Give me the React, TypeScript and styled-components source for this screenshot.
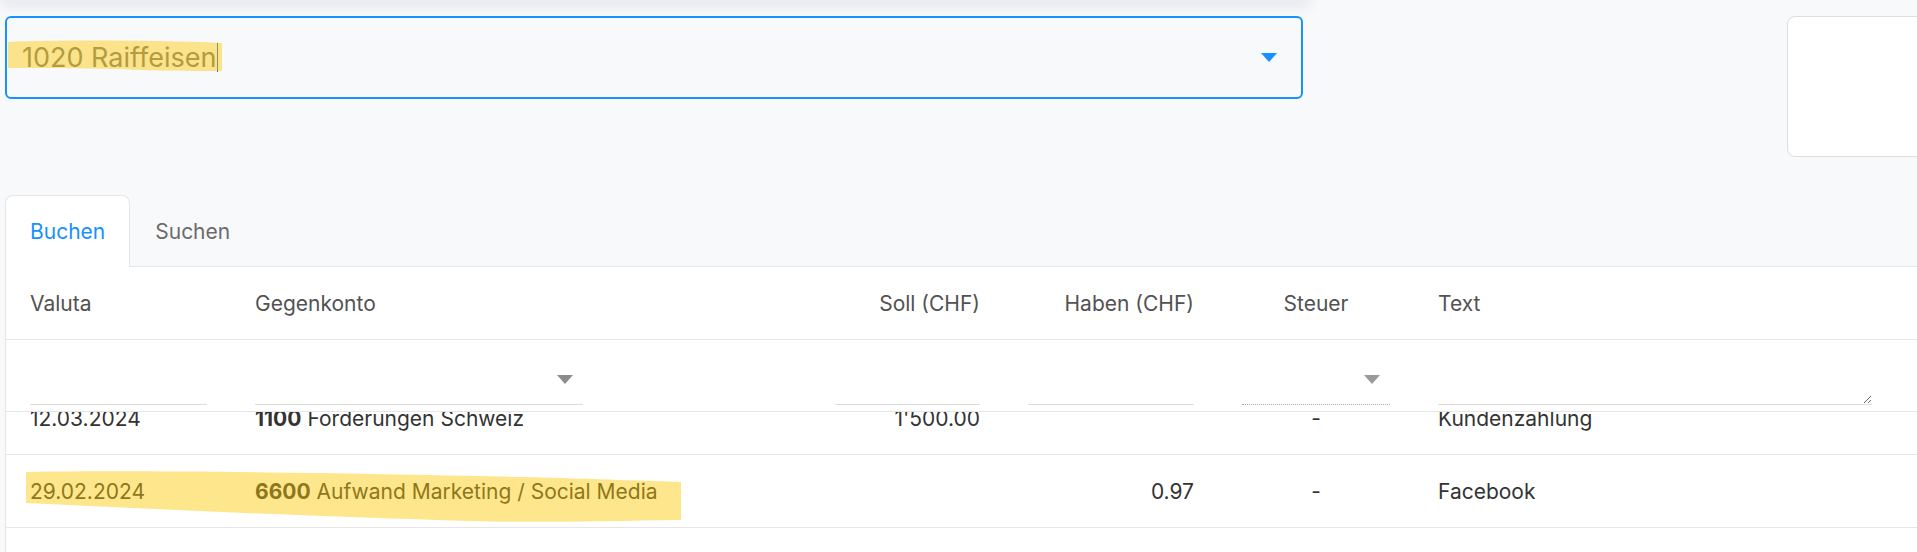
import React, { useLayoutEffect, useRef } from 'react';
import styled, { createGlobalStyle } from 'styled-components';

const GlobalStyle = createGlobalStyle`
  html, body {
    margin: 0;
    padding: 0;
    background: #f8f9fb;
    overflow: hidden;
  }
  body {
    font-family: Inter, "Noto Sans", sans-serif;
  }
  * { box-sizing: border-box; }
`;

const COLS = '225px 580px 193px 214px 196px 1fr';

const Page = styled.div`
  position: relative;
  width: 1960px;
  height: 552px;
  padding-left: 5px;
  display: flex;
  flex-direction: column;
`;

const TopShade = styled.div`
  width: 1300px;
  height: 0;
  box-shadow: 0 0 14px 5px rgba(40, 60, 90, 0.13);
`;

const TopRow = styled.div`
  display: flex;
  justify-content: space-between;
  align-items: flex-start;
  margin-top: 16px;
`;

const AccountSelect = styled.div`
  width: 1298px;
  height: 83px;
  border: 2px solid #1890ff;
  border-radius: 6px;
  background: #f8f9fb;
  display: flex;
  align-items: center;
  padding: 0 24px 0 15px;
  position: relative;
  z-index: 1;
`;

const SelectValue = styled.span`
  flex: 1;
  display: flex;
  align-items: center;
  font-size: 27px;
  color: #777;
`;

const Caret = styled.span`
  display: inline-block;
  width: 1px;
  height: 29px;
  background: #2867b2;
  margin-left: 1px;
`;

const SideCard = styled.div`
  width: 173px;
  height: 141px;
  background: #fff;
  border: 1px solid #dedede;
  border-radius: 8px;
`;

const TabBar = styled.div`
  display: flex;
  margin-top: 38px;
  border-bottom: 1px solid #e6e6e6;
`;

const Tab = styled.div<{ $active?: boolean }>`
  height: 72px;
  padding: 0 24px;
  display: flex;
  align-items: center;
  font-size: 21px;
  color: ${(p) => (p.$active ? '#1890ff' : '#6b6b6b')};
  background: ${(p) => (p.$active ? '#fff' : 'transparent')};
  border: 1px solid ${(p) => (p.$active ? '#e6e6e6' : 'transparent')};
  border-bottom: none;
  border-radius: 8px 8px 0 0;
  margin-bottom: -1px;
`;

const Panel = styled.div`
  flex: 1;
  background: #fff;
  border-left: 1px solid #e6e6e6;
  display: flex;
  flex-direction: column;
  min-height: 0;
`;

const GridRow = styled.div<{ $height: number }>`
  display: grid;
  grid-template-columns: ${COLS};
  height: ${(p) => p.$height}px;
  border-bottom: 1px solid #e6e6e6;
  flex-shrink: 0;
`;

const Cell = styled.div<{ $align?: 'left' | 'right' | 'center'; $end?: boolean }>`
  padding: 0 24px;
  display: flex;
  align-items: ${(p) => (p.$end ? 'flex-end' : 'center')};
  justify-content: ${(p) =>
    p.$align === 'right' ? 'flex-end' : p.$align === 'center' ? 'center' : 'flex-start'};
  padding-bottom: ${(p) => (p.$end ? '6px' : '0')};
  font-size: 21px;
  white-space: nowrap;
`;

const HeadCell = styled(Cell)`
  color: #525252;
`;

const BodyCell = styled(Cell)`
  color: #333;
`;

const Code = styled.b`
  font-weight: 700;
  margin-right: 6px;
`;

const LineInput = styled.input`
  width: 100%;
  height: 44px;
  border: none;
  border-bottom: 1px solid #dcdcdc;
  background: transparent;
  font: inherit;
  outline: none;
`;

const LineSelect = styled.div<{ $width?: number; $dotted?: boolean }>`
  width: ${(p) => (p.$width ? `${p.$width}px` : '100%')};
  height: 51px;
  border-bottom: 1px ${(p) => (p.$dotted ? 'dotted #a8a8a8' : 'solid #dcdcdc')};
  display: flex;
  align-items: center;
  justify-content: flex-end;
  padding-right: 10px;
`;

const LineArea = styled.textarea`
  width: 434px;
  height: 50px;
  border: none;
  border-bottom: 1px solid #dcdcdc;
  background: transparent;
  font: inherit;
  outline: none;
  resize: vertical;
`;

const Scroller = styled.div`
  flex: 1;
  overflow: hidden;
  min-height: 0;
`;

const ScrollContent = styled.div`
  padding-bottom: 60px;
`;

// marker strokes drawn over the screenshot
const Marker = styled.svg`
  position: absolute;
  left: 0;
  top: 0;
  pointer-events: none;
  z-index: 5;
`;

const Triangle = ({ color }: { color: string }) => (
  <svg width="16" height="9" viewBox="0 0 16 9">
    <path d="M0 0 H16 L8 9 Z" fill={color} />
  </svg>
);

type Booking = {
  date: string;
  code: string;
  account: string;
  soll: string;
  haben: string;
  tax: string;
  text: string;
};

const bookings: Booking[] = [
  { date: '12.03.2024', code: '1100', account: 'Forderungen Schweiz', soll: "1'500.00", haben: '', tax: '-', text: 'Kundenzahlung' },
  { date: '29.02.2024', code: '6600', account: 'Aufwand Marketing / Social Media', soll: '', haben: '0.97', tax: '-', text: 'Facebook' },
];

export default function App() {
  const scrollRef = useRef<HTMLDivElement>(null);

  useLayoutEffect(() => {
    if (scrollRef.current) scrollRef.current.scrollTop = 30;
  }, []);

  return (
    <Page>
      <GlobalStyle />
      <TopShade />
      <TopRow>
        <AccountSelect>
          <SelectValue>
            1020 Raiffeisen
            <Caret />
          </SelectValue>
          <Triangle color="#1890ff" />
        </AccountSelect>
        <SideCard />
      </TopRow>

      <TabBar>
        <Tab $active>Buchen</Tab>
        <Tab>Suchen</Tab>
      </TabBar>

      <Panel>
        <GridRow $height={73}>
          <HeadCell>Valuta</HeadCell>
          <HeadCell>Gegenkonto</HeadCell>
          <HeadCell $align="right">Soll (CHF)</HeadCell>
          <HeadCell $align="right">Haben (CHF)</HeadCell>
          <HeadCell $align="center">Steuer</HeadCell>
          <HeadCell>Text</HeadCell>
        </GridRow>

        <GridRow $height={72}>
          <Cell $end>
            <LineInput />
          </Cell>
          <Cell $end>
            <LineSelect $width={328}>
              <Triangle color="#8c8c8c" />
            </LineSelect>
          </Cell>
          <Cell $end>
            <LineInput />
          </Cell>
          <Cell $end>
            <LineInput />
          </Cell>
          <Cell $end>
            <LineSelect $dotted>
              <Triangle color="#9a9a9a" />
            </LineSelect>
          </Cell>
          <Cell $end>
            <LineArea />
          </Cell>
        </GridRow>

        <Scroller ref={scrollRef}>
          <ScrollContent>
            {bookings.map((b) => (
              <GridRow $height={73} key={b.date}>
                <BodyCell>{b.date}</BodyCell>
                <BodyCell>
                  <Code>{b.code}</Code>
                  {b.account}
                </BodyCell>
                <BodyCell $align="right">{b.soll}</BodyCell>
                <BodyCell $align="right">{b.haben}</BodyCell>
                <BodyCell $align="center">{b.tax}</BodyCell>
                <BodyCell>{b.text}</BodyCell>
              </GridRow>
            ))}
          </ScrollContent>
        </Scroller>
      </Panel>

      <Marker width="1917" height="552" viewBox="0 0 1917 552">
        <path
          d="M8 42 C60 40 150 40 222 43 L222 71 C170 71 130 70 120 69 C80 68 40 68 8 68 Z"
          fill="rgba(252, 200, 0, 0.45)"
        />
        <path
          d="M26 472 C150 470 350 473 520 477 C600 479 650 481 681 482 L681 520 C600 521 540 523 470 521 C330 517 170 510 26 503 Z"
          fill="rgba(252, 200, 0, 0.45)"
        />
      </Marker>
    </Page>
  );
}
